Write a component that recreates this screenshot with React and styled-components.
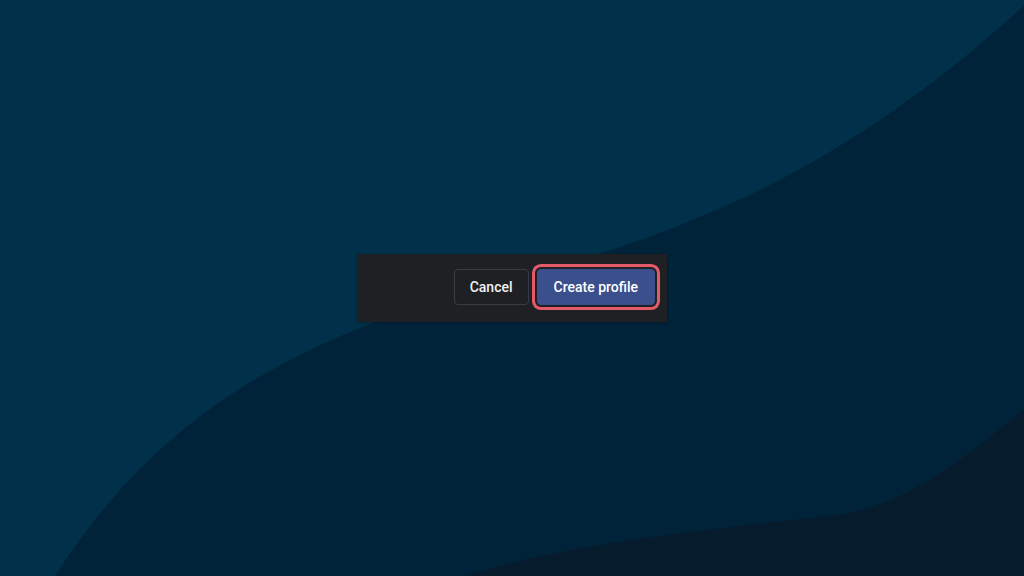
import React from "react";
import styled, { createGlobalStyle } from "styled-components";

const Global = createGlobalStyle`
  html, body { margin: 0; padding: 0; }
  body { font-family: Roboto, "Noto Sans", "Liberation Sans", sans-serif; }
`;

const Page = styled.div`
  width: 1024px;
  height: 576px;
  display: grid;
  overflow: hidden;
  background: #01304a;
  > * { grid-area: 1 / 1; }
`;

const Waves = styled.svg`
  width: 1024px;
  height: 576px;
  display: block;
`;

const Center = styled.div`
  display: flex;
  align-items: center;
  justify-content: center;
`;

const Panel = styled.div`
  width: 310px;
  box-sizing: border-box;
  padding: 15px 12px 17px;
  background: #1f2024;
  display: flex;
  justify-content: flex-end;
  align-items: center;
  gap: 8px;
  box-shadow: 0 1px 3px rgba(0, 0, 0, 0.25);
`;

const Button = styled.button`
  height: 36px;
  box-sizing: border-box;
  padding: 0 ${(p) => (p.$primary ? "16px" : "15px")};
  border-radius: 4px;
  font-family: Roboto, "Noto Sans", "Liberation Sans", sans-serif;
  font-size: 14px;
  font-weight: 500;
  line-height: 1;
  cursor: pointer;
  border: 1px solid ${(p) => (p.$primary ? "#3c4f8d" : "#3a3c42")};
  background: ${(p) => (p.$primary ? "#3c4f8d" : "transparent")};
  color: ${(p) => (p.$primary ? "#ffffff" : "#f0f0f2")};
  box-shadow: ${(p) =>
    p.$focused ? "0 0 0 2px #1f2024, 0 0 0 5px #e35b6b" : "none"};
  outline: none;
`;

export default function App() {
  return (
    <>
      <Global />
      <Page>
        <Waves viewBox="0 0 1024 576" preserveAspectRatio="none">
          <path
            d="M 55 576 C 180 380, 350 320, 560 265 C 760 210, 900 120, 1030 0 L 1030 576 Z"
            fill="#00233a"
          />
          <path
            d="M 466 576 C 560 545, 700 530, 830 516 C 900 508, 950 470, 1030 405 L 1030 576 Z"
            fill="#061b2b"
          />
        </Waves>
        <Center>
          <Panel>
            <Button type="button">Cancel</Button>
            <Button type="button" $primary $focused>
              Create profile
            </Button>
          </Panel>
        </Center>
      </Page>
    </>
  );
}
